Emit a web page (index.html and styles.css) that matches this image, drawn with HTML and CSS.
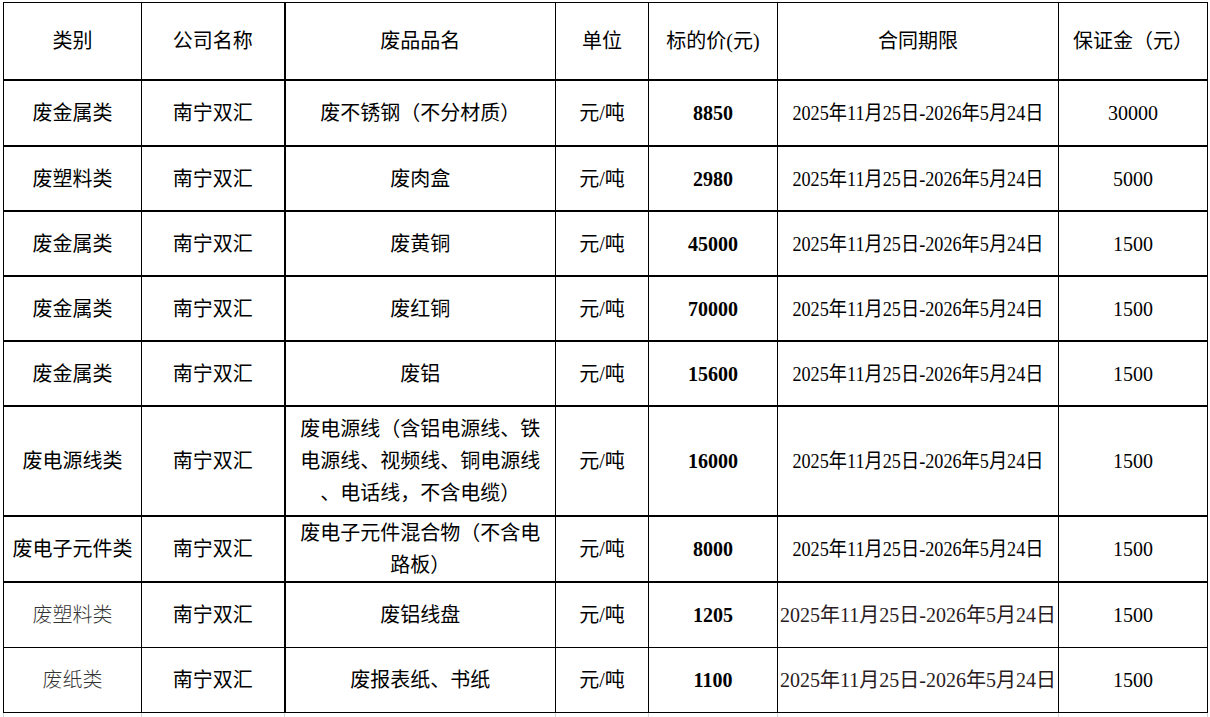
FILE: index.html
```html
<!DOCTYPE html>
<html lang="zh-CN">
<head>
<meta charset="utf-8">
<title>废品标的价</title>
<link rel="stylesheet" href="styles.css">
</head>
<body>
<table class="sheet">
  <colgroup>
    <col class="c1"><col class="c2"><col class="c3"><col class="c4"><col class="c5"><col class="c6"><col class="c7">
  </colgroup>
  <thead>
    <tr class="head">
      <th>类别</th><th class="bl">公司名称</th><th class="bl2">废品品名</th><th class="bl">单位</th><th class="bl">标的价(元)</th><th class="bl">合同期限</th><th class="bl">保证金（元）</th>
    </tr>
  </thead>
  <tbody>
    <tr class="r thick first">
      <td class="cat">废金属类</td><td class="bl">南宁双汇</td><td class="bl2">废不锈钢（不分材质）</td><td class="bl">元/吨</td><td class="bl num">8850</td><td class="bl"><span class="date">2025年11月25日-2026年5月24日</span></td><td class="bl">30000</td>
    </tr>
    <tr class="r thick">
      <td class="cat">废塑料类</td><td class="bl">南宁双汇</td><td class="bl2">废肉盒</td><td class="bl">元/吨</td><td class="bl num">2980</td><td class="bl"><span class="date">2025年11月25日-2026年5月24日</span></td><td class="bl">5000</td>
    </tr>
    <tr class="r thick">
      <td class="cat">废金属类</td><td class="bl">南宁双汇</td><td class="bl2">废黄铜</td><td class="bl">元/吨</td><td class="bl num">45000</td><td class="bl"><span class="date">2025年11月25日-2026年5月24日</span></td><td class="bl">1500</td>
    </tr>
    <tr class="r thick">
      <td class="cat">废金属类</td><td class="bl">南宁双汇</td><td class="bl2">废红铜</td><td class="bl">元/吨</td><td class="bl num">70000</td><td class="bl"><span class="date">2025年11月25日-2026年5月24日</span></td><td class="bl">1500</td>
    </tr>
    <tr class="r thick">
      <td class="cat">废金属类</td><td class="bl">南宁双汇</td><td class="bl2">废铝</td><td class="bl">元/吨</td><td class="bl num">15600</td><td class="bl"><span class="date">2025年11月25日-2026年5月24日</span></td><td class="bl">1500</td>
    </tr>
    <tr class="r tall thick">
      <td class="cat">废电源线类</td><td class="bl">南宁双汇</td><td class="bl2 multi">废电源线（含铝电源线、铁<br>电源线、视频线、铜电源线<br>、电话线，不含电缆）</td><td class="bl">元/吨</td><td class="bl num">16000</td><td class="bl"><span class="date">2025年11月25日-2026年5月24日</span></td><td class="bl">1500</td>
    </tr>
    <tr class="r thick">
      <td class="cat">废电子元件类</td><td class="bl">南宁双汇</td><td class="bl2 multi">废电子元件混合物（不含电<br>路板）</td><td class="bl">元/吨</td><td class="bl num">8000</td><td class="bl"><span class="date">2025年11月25日-2026年5月24日</span></td><td class="bl">1500</td>
    </tr>
    <tr class="r">
      <td class="cat light">废塑料类</td><td class="bl">南宁双汇</td><td class="bl2">废铝线盘</td><td class="bl">元/吨</td><td class="bl num">1205</td><td class="bl"><span class="date2">2025年11月25日-2026年5月24日</span></td><td class="bl">1500</td>
    </tr>
    <tr class="r">
      <td class="cat light">废纸类</td><td class="bl">南宁双汇</td><td class="bl2">废报表纸、书纸</td><td class="bl">元/吨</td><td class="bl num">1100</td><td class="bl"><span class="date2">2025年11月25日-2026年5月24日</span></td><td class="bl">1500</td>
    </tr>
    <tr class="grid">
      <td></td><td></td><td></td><td></td><td></td><td></td><td></td>
    </tr>
  </tbody>
</table>
</body>
</html>
```

FILE: styles.css
```css
html, body {
  margin: 0;
  padding: 0;
  background: #ffffff;
}
body {
  padding: 2px 0 0 3px;
  font-family: "Liberation Serif", "Noto Sans CJK SC", serif;
  font-size: 20px;
  color: #000;
}
.sheet {
  border-collapse: collapse;
  table-layout: fixed;
  width: 1204px;
}
.c1 { width: 138px; }
.c2 { width: 143px; }
.c3 { width: 271px; }
.c4 { width: 93px; }
.c5 { width: 129px; }
.c6 { width: 281px; }
.c7 { width: 149px; }

.sheet th, .sheet td {
  padding: 0;
  text-align: center;
  vertical-align: middle;
  font-weight: 400;
  white-space: nowrap;
  border: 1px solid #000;
  line-height: 26px;
}
.sheet .bl2 {
  border-left: 2px solid #000;
}
.head th {
  height: 76px;
  border-bottom: 2px solid #000;
}
.sheet .r td {
  height: 64px;
}
.sheet .r.thick td {
  height: 63px;
  border-bottom: 2px solid #000;
}
.sheet .r.thick.first td {
  height: 64px;
}
.sheet .r.tall td {
  height: 108px;
}
.sheet td.multi {
  line-height: 32px;
}
.sheet td.num {
  font-weight: 700;
}
.date {
  display: inline-block;
  transform: scaleX(0.91);
  transform-origin: center;
}
.date2 {
  color: #2a1a22;
}
.sheet td.light {
  color: #333;
  font-weight: 300;
}
.sheet .grid td {
  height: 8px;
  border-left: 1px solid #d4d4d4;
  border-right: 1px solid #d4d4d4;
  border-bottom: none;
}
```
